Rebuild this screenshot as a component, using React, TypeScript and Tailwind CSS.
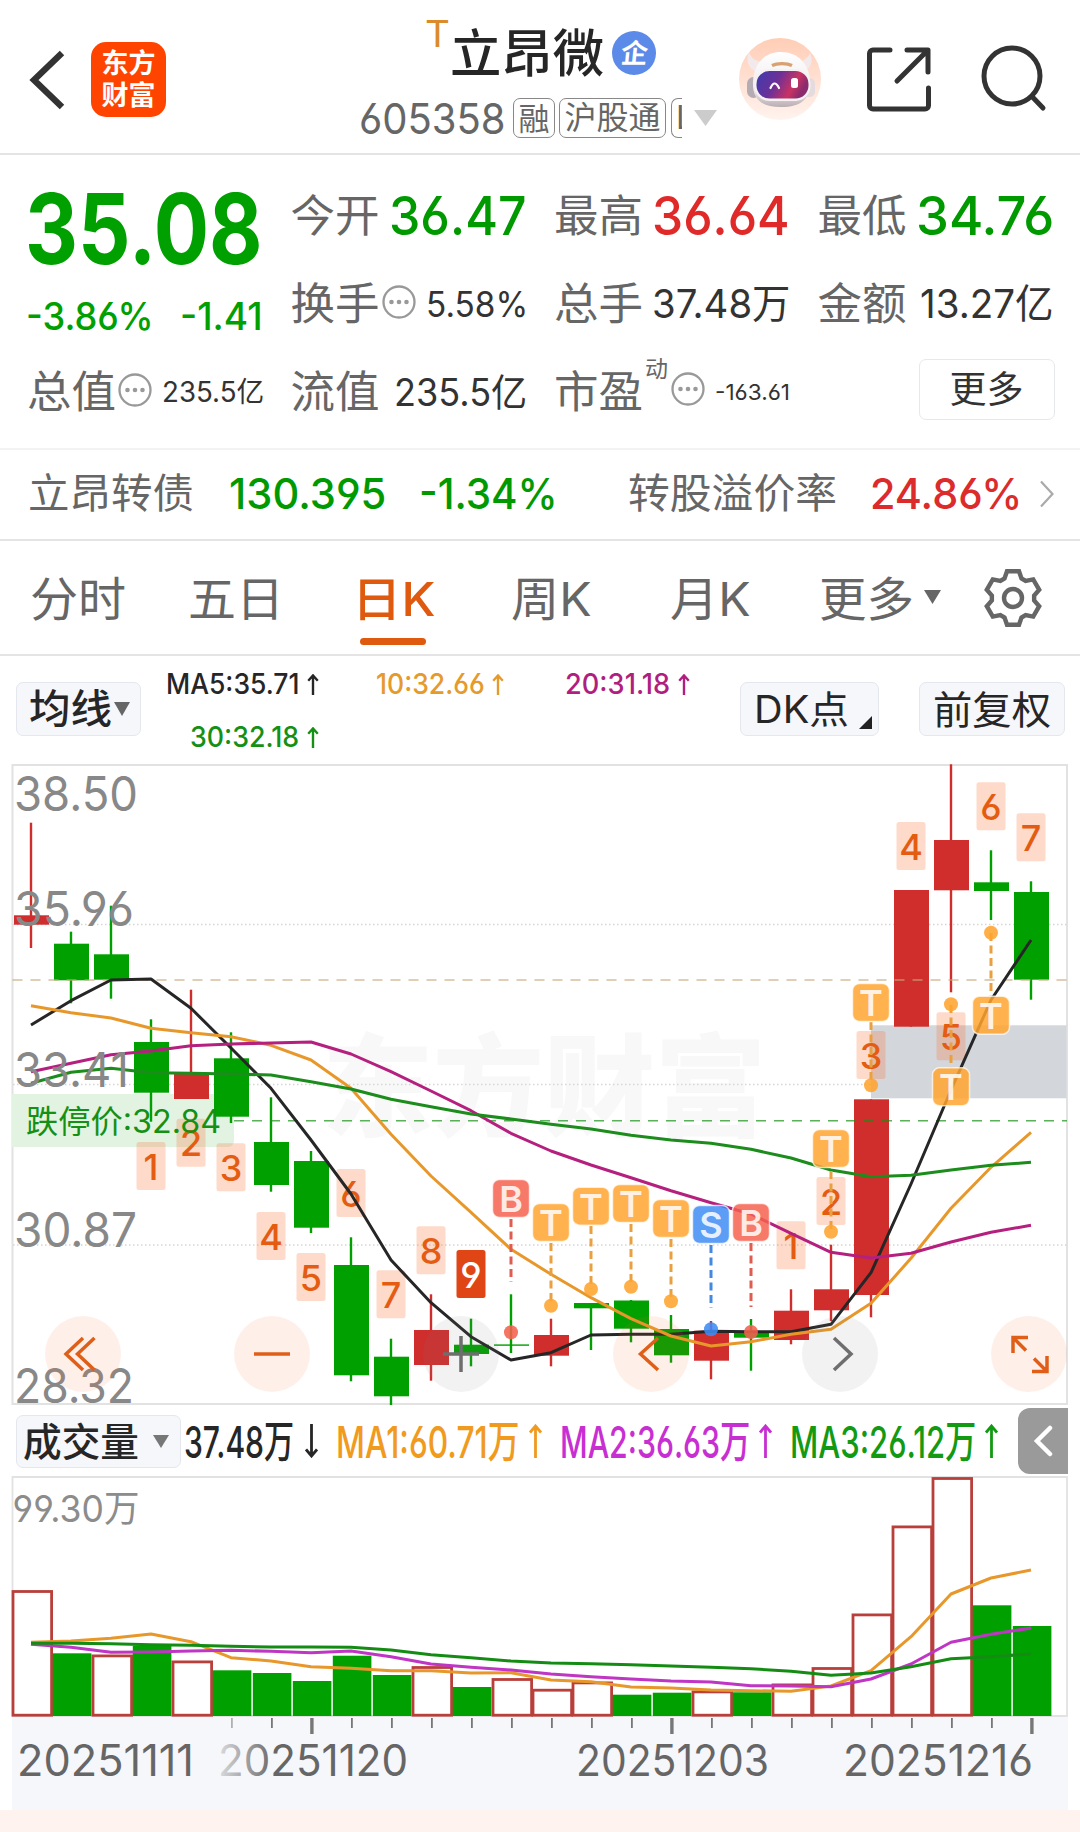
import { useLayoutEffect, useRef, type ReactNode } from "react";

/* Text squeezed or stretched horizontally so that it fills its box. */
function Fit({ className = "", children }: { className?: string; children: ReactNode }) {
  const box = useRef<HTMLSpanElement>(null);
  const ink = useRef<HTMLSpanElement>(null);
  useLayoutEffect(() => {
    if (box.current && ink.current) {
      const s = box.current.clientWidth / ink.current.offsetWidth;
      ink.current.style.transform = `scaleX(${s})`;
    }
  }, []);
  return (
    <span ref={box} className={`block shrink-0 whitespace-nowrap leading-none ${className}`}>
      <span ref={ink} className="inline-block origin-left">
        {children}
      </span>
    </span>
  );
}

const GREEN = "#00a000";
const RED = "#d02d2d";

const cx = (i: number) => 31 + 40 * i;
const line = (ys: number[]) => ys.map((y, i) => `${cx(i)},${y}`).join(" ");

type Candle = [up: boolean, top: number, bottom: number, high: number, low: number];
const candles: Candle[] = [
  [true, 915.3, 924.7, 822.7, 948],
  [false, 943.7, 980.3, 931.7, 1003.3],
  [false, 954.3, 979.7, 905.7, 998.7],
  [false, 1042, 1092.7, 1019.3, 1121.7],
  [true, 1073.3, 1099, 989.7, 1099],
  [false, 1058.3, 1116.7, 1032.3, 1123],
  [false, 1142, 1185, 1097.3, 1191.7],
  [false, 1161, 1227.7, 1151, 1233],
  [false, 1265, 1375.3, 1237.3, 1381.3],
  [false, 1356.7, 1396.3, 1338.7, 1405],
  [true, 1330, 1365, 1294.3, 1380.7],
  [false, 1344.7, 1354, 1318.7, 1366.3],
  [false, 1344.4, 1345.8, 1294.3, 1353],
  [true, 1335, 1355.7, 1318.7, 1366.3],
  [false, 1303, 1308.3, 1303, 1350],
  [false, 1300.5, 1328.7, 1300, 1342.3],
  [false, 1329, 1355.3, 1315, 1362.7],
  [true, 1330.7, 1360.7, 1321, 1379.3],
  [false, 1332.3, 1337.7, 1319, 1370.7],
  [true, 1310.7, 1340, 1289.3, 1344.3],
  [true, 1289.3, 1310.3, 1244.7, 1321],
  [true, 1099.3, 1295, 1099.3, 1317.3],
  [true, 890, 1026.7, 890, 1026.7],
  [true, 840, 890.3, 764.3, 992.3],
  [false, 882.3, 891, 850.3, 920],
  [false, 892, 979.7, 881.3, 999.7],
];

const ma5 = [1025, 1000.7, 980, 979, 1008.3, 1048, 1088.3, 1140, 1194, 1260, 1302.7, 1336.7, 1360, 1352.7, 1335, 1334.3, 1334.3, 1331.3, 1331.7, 1331.7, 1324.3, 1272.7, 1184, 1090, 1000, 940];
const ma10 = [1005.7, 1012.7, 1018, 1028.3, 1032.7, 1036.7, 1045.3, 1060, 1088.3, 1134.3, 1176, 1212.3, 1249.3, 1274.3, 1297.7, 1318.7, 1336, 1346, 1341.7, 1334.3, 1329.3, 1303.3, 1258.3, 1208.3, 1167.3, 1132.3];
const ma20 = [1071.7, 1063.3, 1054.7, 1051, 1045.7, 1044, 1043, 1042, 1054, 1071.7, 1091, 1110.7, 1133.3, 1151, 1165, 1177.7, 1190.7, 1202.7, 1214, 1233.3, 1252.3, 1258, 1253.3, 1242, 1232.3, 1225.3];
const ma30 = [1083.3, 1072.3, 1068.3, 1072.7, 1073.3, 1074, 1075, 1081.7, 1089, 1099.3, 1106.7, 1114, 1119, 1124.3, 1129, 1135.3, 1140, 1143.3, 1149.3, 1158, 1170, 1176.7, 1175.3, 1170, 1165.3, 1162.3];

const counts: [number, string, number][] = [
  [3, "1", 1142], [4, "2", 1118.7], [5, "3", 1143.3], [6, "4", 1212], [7, "5", 1253], [8, "6", 1169],
  [9, "7", 1270.3], [10, "8", 1226.3], [11, "9", 1250], [19, "1", 1221.3], [20, "2", 1177], [21, "3", 1031],
  [22, "4", 822], [23, "5", 1012.3], [24, "6", 782.3], [25, "7", 813.3],
];

/* column, letter, badge top, dot y, dash start, dash end */
const marks: [number, "T" | "B" | "S", number, number, number, number][] = [
  [12, "B", 1180, 1332.3, 1219, 1282],
  [13, "T", 1204, 1305.7, 1243, 1305],
  [14, "T", 1187.7, 1289, 1226, 1289],
  [15, "T", 1185, 1286.7, 1224, 1286],
  [16, "T", 1200, 1301.3, 1239, 1301],
  [17, "S", 1206, 1329.3, 1245, 1308],
  [18, "B", 1204, 1332, 1243, 1307],
  [20, "T", 1130, 1231.7, 1171, 1231],
  [21, "T", 984, 1085.3, 1022, 1085],
  [23, "T", 1068.3, 1004.3, 1005, 1068],
  [24, "T", 996.7, 932.7, 933, 996],
];
const markFill = { T: "#ffa42e", B: "#f4614f", S: "#3f8cf5" };
const markLine = { T: "#e9a040", B: "#de5c50", S: "#4488e0" };

const volumes: [boolean, number][] = [
  [true, 1590.3], [false, 1653.3], [true, 1654.7], [false, 1645.7], [true, 1660.7], [false, 1670.3], [false, 1673],
  [false, 1681], [false, 1655.7], [false, 1675], [true, 1666.3], [false, 1687], [true, 1678.3], [true, 1689],
  [true, 1681.7], [false, 1694.7], [false, 1692.7], [true, 1690.7], [false, 1692.3], [true, 1683.7], [true, 1667.3],
  [true, 1613.7], [true, 1525.7], [true, 1477.3], [false, 1605.3], [false, 1626],
];
const vm1 = [1642.3, 1641, 1638.3, 1634, 1641.7, 1657.7, 1661, 1666.7, 1668.3, 1670.7, 1670.7, 1673, 1672.7, 1680, 1681.7, 1687, 1688, 1690, 1690.7, 1691.3, 1686, 1670.7, 1636.7, 1594, 1578, 1570];
const vm2 = [1644.3, 1647.3, 1652.3, 1652, 1651, 1650.3, 1651.3, 1652.7, 1651, 1656.7, 1664, 1667.3, 1670, 1674, 1676.7, 1679, 1681, 1682, 1685.7, 1686, 1686.7, 1679, 1664, 1642.3, 1634.3, 1628];
const vm3 = [1643.3, 1643.3, 1643.7, 1644.7, 1645.3, 1646.3, 1647, 1647, 1647.3, 1650, 1654.7, 1657.7, 1661, 1663, 1663.7, 1664.7, 1666, 1667.3, 1668.7, 1671.3, 1675.3, 1673, 1666.7, 1658.7, 1656.7, 1654];

function SvgLabel({ x, y, w, size, fill, weight, children }: { x: number; y: number; w: number; size: number; fill: string; weight?: number; children: string }) {
  return (
    <text x={x} y={y} textLength={w} lengthAdjust="spacingAndGlyphs" fontSize={size} fill={fill} fontWeight={weight}>
      {children}
    </text>
  );
}

function Robot() {
  return (
    <svg className="h-[82px] w-[82px]" viewBox="0 0 82 82">
      <defs>
        <linearGradient id="halo" x1="0" y1="0" x2="0" y2="1">
          <stop offset="0" stopColor="#ffcdb6" />
          <stop offset="1" stopColor="#fff3ee" />
        </linearGradient>
        <linearGradient id="visor" x1="0" y1="0" x2="1" y2="0.3">
          <stop offset="0" stopColor="#3d3cae" />
          <stop offset="0.45" stopColor="#6b3098" />
          <stop offset="0.8" stopColor="#c93263" />
          <stop offset="1" stopColor="#8a2b6e" />
        </linearGradient>
        <linearGradient id="shell" x1="0" y1="0" x2="0" y2="1">
          <stop offset="0" stopColor="#ffffff" />
          <stop offset="0.7" stopColor="#efeaec" />
          <stop offset="1" stopColor="#b9adb2" />
        </linearGradient>
      </defs>
      <circle cx="41" cy="41" r="41" fill="url(#halo)" />
      <path d="M10 14c-3 6-2 15 6 19l7-9c-7-1-11-4-13-10zM71 15c3 6 2 14-5 18l-7-9c6-1 10-4 12-9z" fill="#f3e9ea" />
      <rect x="8" y="39" width="13" height="21" rx="6.500" fill="#b5abb2" />
      <rect x="64" y="40" width="12" height="19" rx="5.500" fill="#e3dbde" />
      <path d="M42 14c17 0 28 12 29 29 1 17-8 26-29 26S13 60 14 43c1-17 11-29 28-29z" fill="url(#shell)" />
      <rect x="15.500" y="31" width="56" height="32" rx="15" fill="#f6f1f3" />
      <rect x="17.500" y="33" width="52" height="27.500" rx="13" fill="url(#visor)" />
      <path d="M33 27.500c5-2.500 15-2.500 20 0" stroke="#d9a070" strokeWidth="3.400" fill="none" />
      <path d="M31.500 50q4-9 8.500 0" stroke="#fff" strokeWidth="2.200" fill="none" strokeLinecap="round" />
      <rect x="52" y="40" width="7" height="10" rx="2.500" fill="#fff" />
    </svg>
  );
}

function Gear() {
  const pts: string[] = [];
  for (let k = 0; k < 6; k++) {
    const a = (Math.PI / 3) * k;
    const tooth: [number, number][] = [[-8.5, -19.5], [-6, -26.8], [6, -26.8], [8.5, -19.5]];
    for (const [x, y] of tooth) {
      pts.push(`${30 + x * Math.cos(a) - y * Math.sin(a)},${30 + x * Math.sin(a) + y * Math.cos(a)}`);
    }
  }
  return (
    <svg className="h-[60px] w-[60px]" viewBox="0 0 60 60" fill="none" stroke="#666" strokeWidth="4.400">
      <polygon points={pts.join(" ")} />
      <circle cx="30" cy="30" r="9" />
    </svg>
  );
}

function Dots() {
  return (
    <svg className="h-[34px] w-[34px] shrink-0" viewBox="0 0 34 34">
      <circle cx="17" cy="17" r="15.500" fill="none" stroke="#999" strokeWidth="2.300" />
      <circle cx="9.500" cy="17" r="2.300" fill="#999" />
      <circle cx="17" cy="17" r="2.300" fill="#999" />
      <circle cx="24.500" cy="17" r="2.300" fill="#999" />
    </svg>
  );
}

function Caret({ className = "" }: { className?: string }) {
  return (
    <svg className={`shrink-0 ${className}`} viewBox="0 0 16 14" preserveAspectRatio="none" fill="currentColor">
      <path d="M0 0h16l-8 14z" />
    </svg>
  );
}

function Arrow({ className = "", down = false }: { className?: string; down?: boolean }) {
  return (
    <svg className={`shrink-0 ${className}`} viewBox="0 0 12 22" fill="none" stroke="currentColor" strokeWidth="2.500">
      {down ? <path d="M6 0v20.500M1 15l5 5.500 5-5.500" /> : <path d="M6 22V1.500M1 7l5-5.500L11 7" />}
    </svg>
  );
}

function LongArrow({ className = "", down = false }: { className?: string; down?: boolean }) {
  return (
    <svg className={`shrink-0 ${className}`} viewBox="0 0 13 34" fill="none" stroke="currentColor" strokeWidth="2.800">
      {down ? <path d="M6.500 0v32M1 25.500l5.500 6.500 5.500-6.500" /> : <path d="M6.500 34V2M1 8.500L6.500 2 12 8.500" />}
    </svg>
  );
}

function Header() {
  return (
    <header className="flex h-[155px] border-b-2 border-[#e4e4e4]">
      <svg className="mt-[48px] ml-[28px] h-[64px] w-[37px]" viewBox="0 0 37 64" fill="none" stroke="#333" strokeWidth="6.400">
        <path d="M34 5L6 32l28 27" />
      </svg>
      <div className="mt-[42px] ml-[26px] flex h-[75px] w-[75px] flex-col items-center justify-center gap-[5px] rounded-[15px] bg-[#ff4400] text-[27px] leading-[27px] font-bold text-white">
        <span>东方</span>
        <span>财富</span>
      </div>
      <div className="ml-[195px] flex w-[357px] flex-col">
        <div className="flex h-[90px] pl-[64px]">
          <Fit className="mt-[15px] w-[25px] text-[37px] text-[#dc8a2a]">T</Fit>
          <Fit className="mt-[28px] w-[154px] text-[51px] font-medium text-[#262626]">立昂微</Fit>
          <span className="mt-[31px] ml-[8px] flex h-[44px] w-[44px] items-center justify-center rounded-full bg-[#5c8ae8] text-[27px] leading-none font-bold text-white">
            <span className="-skew-x-6">企</span>
          </span>
        </div>
        <div className="flex h-[56px] items-center text-[#666]">
          <Fit className="-ml-[2px] w-[147px] text-[43px]">605358</Fit>
          <span className="ml-[7px] flex h-[40px] w-[42px] items-center justify-center rounded-[7px] border-[1.5px] border-[#888] text-[31px] leading-none">融</span>
          <span className="ml-[4px] flex h-[40px] w-[107px] items-center justify-center rounded-[7px] border-[1.5px] border-[#888] text-[32px] leading-none">沪股通</span>
          <span className="ml-[5px] flex h-[40px] w-[11px] items-center overflow-hidden rounded-l-[7px] border-y-[1.5px] border-l-[1.5px] border-[#888] pl-[4px] text-[32px] leading-none">L</span>
          <Caret className="ml-[12px] h-[16px] w-[23px] text-[#ccc]" />
        </div>
      </div>
      <div className="mt-[38px] ml-[21px]">
        <Robot />
      </div>
      <svg className="mt-[47px] ml-[46px] h-[65px] w-[64px]" viewBox="0 0 64 65" fill="none" stroke="#333" strokeWidth="5" strokeLinecap="round" strokeLinejoin="round">
        <path d="M23 3H6a3.500 3.500 0 0 0-3.500 3.500v52A3.500 3.500 0 0 0 6 62h52a3.500 3.500 0 0 0 3.500-3.500V41M40 3h21v22M60 4L30 34" />
      </svg>
      <svg className="mt-[44px] ml-[49px] h-[68px] w-[67px]" viewBox="0 0 67 68" fill="none" stroke="#333" strokeWidth="5" strokeLinecap="round">
        <circle cx="32" cy="32" r="28" />
        <path d="M52 52.500L63 64" />
      </svg>
    </header>
  );
}

function Cell({ label, more, children }: { label: string; more?: boolean; children: ReactNode }) {
  return (
    <div className="flex items-center">
      <span className="-ml-px shrink-0 text-[44.500px] leading-none whitespace-nowrap text-[#666]">{label}</span>
      {more && <span className="ml-[2px] -translate-y-[2px]"><Dots /></span>}
      <div className="ml-auto">{children}</div>
    </div>
  );
}

function Quote() {
  return (
    <section className="grid h-[295px] grid-cols-[235px_235px_235px_235px] grid-rows-[88px_88px_88px] gap-x-[28.500px] border-b-2 border-[#f3f3f3] pt-[17px] pl-[28px] text-[#333]">
      <div className="row-span-2 flex flex-col text-[#00a000]">
        <Fit className="-ml-[3px] mt-[8px] w-[238px] text-[97px] font-bold">35.08</Fit>
        <div className="mt-[20px] flex justify-between">
          <Fit className="-ml-[2px] w-[128px] text-[38px] font-medium">-3.86%</Fit>
          <Fit className="w-[83px] text-[38px] font-medium">-1.41</Fit>
        </div>
      </div>
      <Cell label="今开"><Fit className="w-[138px] text-[54px] font-medium text-[#009a00]">36.47</Fit></Cell>
      <Cell label="最高"><Fit className="w-[138px] text-[54px] font-medium text-[#e02a2a]">36.64</Fit></Cell>
      <Cell label="最低"><Fit className="w-[138px] text-[54px] font-medium text-[#009a00]">34.76</Fit></Cell>
      <Cell label="换手" more><Fit className="-mr-px w-[102px] text-[35px]">5.58%</Fit></Cell>
      <Cell label="总手"><Fit className="w-[138px] text-[40px]">37.48万</Fit></Cell>
      <Cell label="金额"><Fit className="w-[134px] text-[40px]">13.27亿</Fit></Cell>
      <Cell label="总值" more><Fit className="-mr-px w-[102px] text-[28.500px]">235.5亿</Fit></Cell>
      <Cell label="流值"><Fit className="w-[133px] text-[38px]">235.5亿</Fit></Cell>
      <div className="flex items-center">
        <span className="-ml-px text-[44.500px] leading-none text-[#666]">市盈</span>
        <span className="mb-[46px] ml-[2px] text-[23px] leading-none text-[#666]">动</span>
        <span className="ml-[3px] -translate-y-[3px]"><Dots /></span>
        <Fit className="ml-auto w-[75px] text-[22px]">-163.61</Fit>
      </div>
      <button className="mt-[11px] ml-auto flex h-[61px] w-[136px] translate-x-[1px] items-center justify-center rounded-[7px] border-[1.5px] border-[#e6e8ec] text-[37px] leading-none">更多</button>
    </section>
  );
}

function Bond() {
  return (
    <section className="flex h-[91px] items-center border-b-2 border-[#e4e4e4] pb-[2px] pl-[28px]">
      <Fit className="w-[166px] text-[41px] text-[#666]">立昂转债</Fit>
      <Fit className="ml-[35px] w-[157px] text-[43px] font-medium text-[#009a00]">130.395</Fit>
      <Fit className="ml-[33px] w-[139px] text-[43px] font-medium text-[#009a00]">-1.34%</Fit>
      <Fit className="ml-[70px] w-[209px] text-[41px] text-[#666]">转股溢价率</Fit>
      <Fit className="ml-[33px] w-[152px] text-[43px] font-medium text-[#dc2b2b]">24.86%</Fit>
      <svg className="ml-[18px] h-[28px] w-[14px]" viewBox="0 0 14 28" fill="none" stroke="#aaa" strokeWidth="2.200">
        <path d="M1 1.500L12.500 14 1 26.500" />
      </svg>
    </section>
  );
}

function Tabs() {
  return (
    <nav className="flex h-[115px] items-center border-b-2 border-[#e4e4e4] pt-[2px] text-[47px] leading-none text-[#666]">
      <Fit className="ml-[30px] w-[96px]">分时</Fit>
      <Fit className="ml-[62px] w-[96px]">五日</Fit>
      <div className="relative ml-[68px]">
        <Fit className="w-[83px] font-medium text-[#df5a0e]">日K</Fit>
        <span className="absolute top-[63px] left-[8px] h-[7px] w-[66px] rounded-full bg-[#df5a0e]" />
      </div>
      <Fit className="ml-[76px] w-[81px]">周K</Fit>
      <Fit className="ml-[78px] w-[81px]">月K</Fit>
      <Fit className="ml-[68px] w-[95px]">更多</Fit>
      <Caret className="ml-[10px] h-[14px] w-[17px] -translate-y-[2px]" />
      <span className="ml-[42px] -translate-y-[1px]"><Gear /></span>
    </nav>
  );
}

function Averages() {
  return (
    <section className="flex h-[108px] pl-[16px] text-[#262626]">
      <button className="mt-[26px] flex h-[54px] w-[125px] items-center rounded-[7px] border-[1.5px] border-[#e4e7ee] bg-[#f6f7fb] pl-[10px]">
        <Fit className="w-[83px] text-[40px] font-medium">均线</Fit>
        <Caret className="ml-[4px] h-[14px] w-[16px] text-[#666]" />
      </button>
      <div className="mt-[2px] ml-[25px] grid grid-cols-[153px_185px_186px] grid-rows-[53px_53px] items-center justify-items-end">
        <div className="flex items-center gap-[8px]">
          <Fit className="w-[133px] text-[28.500px] font-medium">MA5:35.71</Fit>
          <Arrow className="h-[21px] w-[12px]" />
        </div>
        <div className="flex items-center gap-[7px] text-[#e59a2c]">
          <Fit className="w-[109px] text-[28.500px] font-medium">10:32.66</Fit>
          <Arrow className="h-[21px] w-[12px]" />
        </div>
        <div className="flex items-center gap-[8px] text-[#b01f80]">
          <Fit className="w-[105px] text-[28.500px] font-medium">20:31.18</Fit>
          <Arrow className="h-[21px] w-[12px]" />
        </div>
        <div className="flex items-center gap-[8px] text-[#149014]">
          <Fit className="w-[109px] text-[28.500px] font-medium">30:32.18</Fit>
          <Arrow className="h-[21px] w-[12px]" />
        </div>
      </div>
      <button className="mt-[26px] ml-[50px] flex h-[54px] w-[139px] items-center rounded-[7px] border-[1.5px] border-[#e4e7ee] bg-[#f6f7fb] pl-[11px]">
        <Fit className="w-[95px] text-[38px]">DK点</Fit>
        <svg className="mt-[26px] ml-[12px] h-[13px] w-[13px] shrink-0" viewBox="0 0 13 13">
          <path d="M13 0v13H0z" fill="#222" />
        </svg>
      </button>
      <button className="mt-[26px] ml-[40px] flex h-[54px] w-[146px] items-center justify-center rounded-[7px] border-[1.5px] border-[#e4e7ee] bg-[#f6f7fb]">
        <Fit className="w-[118px] text-[39px]">前复权</Fit>
      </button>
    </section>
  );
}

function PriceChart() {
  return (
    <svg className="block h-[642px] w-[1080px]" viewBox="0 764 1080 642">
      <text x="322" y="1128" fontSize="111" fontWeight="900" fill="#f8f8f8" textLength="444">东方财富</text>
      <path d="M12.500 1404V765H1067V1404z" fill="none" stroke="#e2e2e2" strokeWidth="2" />
      <g stroke="#d5d5d5" strokeWidth="1.300" strokeDasharray="1.500 2.500">
        <path d="M13 924.500H1067M13 1084.500H1067M13 1245H1067" />
      </g>
      <path d="M12 1094H228a6 6 0 0 1 6 6V1141a6 6 0 0 1-6 6H12z" fill="#e2f3e2" />
      <rect x="871" y="1025.300" width="195.500" height="73" fill="#d3d6db" />
      {candles.map(([up, top, bottom, high, low], i) => (
        <g key={i} fill={up ? RED : GREEN}>
          <rect x={cx(i) - 1.2} y={high} width="2.400" height={low - high} />
          <rect x={cx(i) - 17} y={top} width="35" height={bottom - top} />
        </g>
      ))}
      <path d="M12.500 980H1067" stroke="#c8a87c" strokeOpacity="0.750" strokeWidth="1.600" strokeDasharray="10 8" />
      <path d="M234 1120.700H1067" stroke="#149014" strokeOpacity="0.700" strokeWidth="1.600" strokeDasharray="10 8" />
      {counts.map(([i, n, y]) => (
        <g key={i}>
          <rect x={cx(i) - 14.5} y={y} width="29" height="48" rx="2.500" fill={n === "9" ? "#df4515" : "#f8793c"} fillOpacity={n === "9" ? 1 : 0.28} />
          <text x={cx(i)} y={y + 37.5} textAnchor="middle" fontSize="36" fontWeight="500" fill={n === "9" ? "#fff" : "#e45c12"}>{n}</text>
        </g>
      ))}
      <g fill="none" strokeWidth="3" strokeLinejoin="round">
        <polyline points={line(ma5)} stroke="#262626" />
        <polyline points={line(ma10)} stroke="#e8982a" />
        <polyline points={line(ma20)} stroke="#b5207f" />
        <polyline points={line(ma30)} stroke="#1c8c1c" />
      </g>
      {marks.map(([i, k, y, dot, a, b]) => (
        <g key={i}>
          <path d={`M${cx(i)} ${a}V${b}`} stroke={markLine[k]} strokeWidth="3" strokeDasharray="8 4.500" />
          <circle cx={cx(i)} cy={dot} r="7" fill={markFill[k]} fillOpacity="0.880" />
          <rect x={cx(i) - 18.5} y={y - 0.5} width="37" height="38" rx="7" fill={markFill[k]} fillOpacity="0.850" stroke="#fff" strokeOpacity="0.700" strokeWidth="1.500" />
          <text x={cx(i)} y={y + 32} textAnchor="middle" fontSize="36" fontWeight="600" fill="#fff" fillOpacity="0.850">{k}</text>
        </g>
      ))}
      <SvgLabel x={14} y={811} w={124} size={48} fill="#888">38.50</SvgLabel>
      <SvgLabel x={14} y={926} w={120} size={48} fill="#888">35.96</SvgLabel>
      <SvgLabel x={14} y={1086.500} w={115} size={48} fill="#888">33.41</SvgLabel>
      <SvgLabel x={14} y={1247} w={123} size={48} fill="#888">30.87</SvgLabel>
      <SvgLabel x={14} y={1403} w={120} size={48} fill="#888">28.32</SvgLabel>
      <SvgLabel x={26} y={1133} w={195} size={32} fill="#149014">跌停价:32.84</SvgLabel>
    </svg>
  );
}

function ChartControls() {
  const icons: [boolean, ReactNode][] = [
    [true, <path key="p" d="M38 22L21 38l17 16M49.500 22L32.500 38l17 16" />],
    [true, <path key="p" d="M20 38h36" />],
    [false, <path key="p" d="M20 38h36M38 20v36" />],
    [true, <path key="p" d="M45 22L27.500 38 45 54" />],
    [false, <path key="p" d="M32 22l17 16-17 16" />],
    [true, <path key="p" d="M37 21.500H22V37M22.500 22L35 34.500M41 55.500h15V40M55.500 55L43 42.500" />],
  ];
  return (
    <div className="absolute top-[552px] left-[45px] flex w-[1022px] justify-between">
      {icons.map(([hot, icon], i) => (
        <button key={i} className={hot ? "h-[76px] w-[76px] rounded-full bg-[#fa6b23]/10" : "h-[76px] w-[76px] rounded-full bg-[#808080]/10"}>
          <svg className="h-[76px] w-[76px]" viewBox="0 0 76 76" fill="none" stroke={hot ? "#df5f18" : "#6e6e6e"} strokeWidth="3.500">
            {icon}
          </svg>
        </button>
      ))}
    </div>
  );
}

function VolumeBar() {
  return (
    <section className="flex h-[70px] items-center pb-[1px] pl-[16px] text-[#262626]">
      <button className="mt-[1px] flex h-[53px] w-[165px] shrink-0 items-center rounded-[7px] border-[1.5px] border-[#e4e7ee] bg-[#f6f7fb] pl-[6px]">
        <Fit className="w-[116px] text-[39px] font-medium">成交量</Fit>
        <Caret className="ml-[14px] h-[13px] w-[16px] text-[#777]" />
      </button>
      <Fit className="ml-[3px] w-[110px] translate-y-[1px] text-[44px] font-medium">37.48万</Fit>
      <LongArrow down className="ml-[11px] h-[34px] w-[13px]" />
      <div className="ml-[18px] flex items-center text-[#f09a1e]">
        <Fit className="w-[183px] translate-y-[1px] text-[44px] font-medium">MA1:60.71万</Fit>
        <LongArrow className="ml-[10px] h-[34px] w-[13px]" />
      </div>
      <div className="ml-[18px] flex items-center text-[#c82fd2]">
        <Fit className="w-[190px] translate-y-[1px] text-[44px] font-medium">MA2:36.63万</Fit>
        <LongArrow className="ml-[9px] h-[34px] w-[13px]" />
      </div>
      <div className="ml-[18px] flex items-center text-[#129a12]">
        <Fit className="w-[186px] translate-y-[1px] text-[44px] font-medium">MA3:26.12万</Fit>
        <LongArrow className="ml-[9px] h-[34px] w-[13px]" />
      </div>
      <button className="mr-[12px] ml-auto flex h-[66px] w-[50px] shrink-0 items-center justify-center rounded-l-[12px] bg-[#9a9a9a]">
        <svg className="h-[32px] w-[20px]" viewBox="0 0 20 32" fill="none" stroke="#fff" strokeWidth="4.500" strokeLinecap="round">
          <path d="M17 3L4 16l13 13" />
        </svg>
      </button>
    </section>
  );
}

function VolumeChart() {
  return (
    <svg className="block h-[334px] w-[1080px]" viewBox="0 1476 1080 334">
      <defs>
        <linearGradient id="fade" x1="0" x2="1">
          <stop offset="0" stopColor="#f6f7fa" stopOpacity="1" />
          <stop offset="1" stopColor="#f6f7fa" stopOpacity="0" />
        </linearGradient>
      </defs>
      <rect x="12" y="1716" width="1056" height="94" fill="#f6f7fa" />
      <path d="M12.500 1716V1477H1067V1716z" fill="#fff" stroke="#e2e2e2" strokeWidth="1.800" />
      <SvgLabel x={12.5} y={1521.500} w={127} size={37} fill="#8c8c8c">99.30万</SvgLabel>
      {volumes.map(([up, top], i) =>
        up ? <rect key={i} x={13 + 40 * i} y={top + 1.2} width="38.600" height={1714 - top} fill="#fff" stroke="#b93f3b" strokeWidth="2.800" /> : null,
      )}
      {volumes.map(([up, top], i) =>
        up ? null : <rect key={i} x={12.8 + 40 * i} y={top} width="38.600" height={1716 - top} fill={GREEN} />,
      )}
      <g fill="none" strokeWidth="3" strokeLinejoin="round">
        <polyline points={line(vm1)} stroke="#e8982a" />
        <polyline points={line(vm2)} stroke="#bf35c4" />
        <polyline points={line(vm3)} stroke="#148c14" />
      </g>
      {volumes.map((_, i) => {
        const major = i === 7 || i === 16 || i === 25;
        if (i < 5) return null;
        return (
          <rect
            key={i}
            x={cx(i) + (major ? -0.8 : 0)}
            y="1718"
            width={major ? 3.4 : 1.8}
            height={major ? 16 : 10}
            fill={i === 5 ? "#b0b0b0" : "#777"}
          />
        );
      })}
      <SvgLabel x={17} y={1775.500} w={177} size={44} fill="#666">20251111</SvgLabel>
      <SvgLabel x={218} y={1775.500} w={190} size={44} fill="#666">20251120</SvgLabel>
      <rect x="205" y="1740" width="70" height="42" fill="url(#fade)" />
      <SvgLabel x={576} y={1775.500} w={193} size={44} fill="#666">20251203</SvgLabel>
      <SvgLabel x={843} y={1775.500} w={190} size={44} fill="#666">20251216</SvgLabel>
    </svg>
  );
}

export default function App() {
  return (
    <main className="h-[1832px] w-[1080px] overflow-hidden bg-white font-['Inter','Noto_Sans_CJK_SC',sans-serif] [font-feature-settings:'cv03','cv04']">
      <Header />
      <Quote />
      <Bond />
      <Tabs />
      <Averages />
      <div className="relative">
        <PriceChart />
        <ChartControls />
      </div>
      <VolumeBar />
      <VolumeChart />
      <div className="h-[22px] bg-[#fef3ee]" />
    </main>
  );
}
